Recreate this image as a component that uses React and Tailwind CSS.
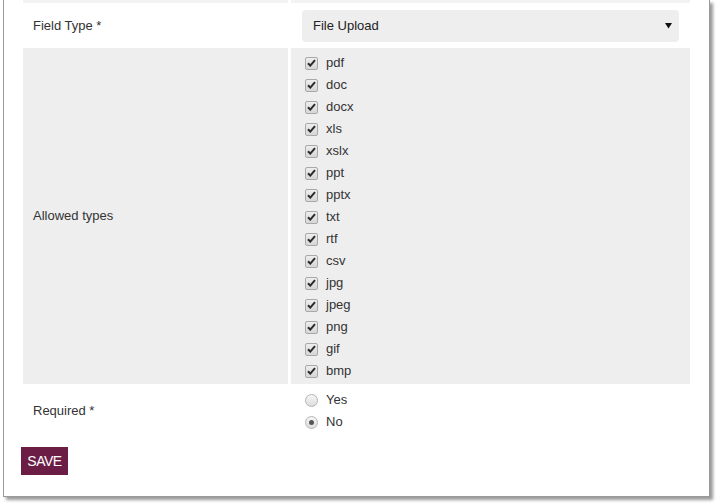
import React, { useState } from "react";

const TYPES = ["pdf", "doc", "docx", "xls", "xslx", "ppt", "pptx", "txt", "rtf", "csv", "jpg", "jpeg", "png", "gif", "bmp"];

const CheckBox = ({ checked }) => (
  <span className="w-[13px] h-[13px] rounded-[2px] border border-[#a9a9a9] bg-gradient-to-b from-[#eeeeee] to-[#d6d6d6] flex items-center justify-center shrink-0">
    {checked && (
      <svg width="9" height="8" viewBox="0 0 9 8">
        <path d="M1 4.2 L3.3 6.6 L8 1.2" stroke="#2a2a2a" strokeWidth="2" fill="none" />
      </svg>
    )}
  </span>
);

const Radio = ({ checked }) => (
  <span className="w-[13px] h-[13px] rounded-full border border-[#b5b5b5] bg-gradient-to-b from-[#f6f6f6] to-[#dddddd] flex items-center justify-center shrink-0">
    {checked && <span className="w-[5px] h-[5px] rounded-full bg-[#555]" />}
  </span>
);

const App = () => {
  const [checked] = useState(TYPES.map(() => true));
  const [required] = useState("no");

  return (
    <div className="w-[718px] h-[504px] bg-white text-[13px] text-[#333] font-['Liberation_Sans',Arial,sans-serif]">
      <div className="ml-[3px] w-[707px] h-[497px] bg-white border-l border-r border-b border-[#9a9a9a] shadow-[3px_3px_3px_rgba(0,0,0,0.4)] pl-[19px] pr-[19px]">
        {/* end of previous row */}
        <div className="flex gap-[3px] h-[3px]">
          <div className="w-[265px] bg-[#f3f3f3]" />
          <div className="flex-1 bg-[#f3f3f3]" />
        </div>

        {/* Field type */}
        <div className="flex gap-[3px] h-[45px]">
          <div className="w-[265px] flex items-center pl-[10px]">Field Type *</div>
          <div className="flex-1 flex items-center pl-[11px] pr-[11px]">
            <div className="w-full h-[32px] bg-[#eeeeee] rounded-[4px] flex items-center justify-between pl-[11px] pr-[7px] text-[#222]">
              <span>File Upload</span>
              <svg width="7" height="7" viewBox="0 0 7 7">
                <path d="M0 1 L7 1 L3.5 6.5 Z" fill="#111" />
              </svg>
            </div>
          </div>
        </div>

        {/* Allowed types */}
        <div className="flex gap-[3px] h-[336px]">
          <div className="w-[265px] bg-[#eeeeee] flex items-center pl-[10px]">Allowed types</div>
          <div className="flex-1 bg-[#eeeeee] pt-[4px] pl-[14px]">
            {TYPES.map((t, i) => (
              <label key={t} className="h-[22px] flex items-center gap-[8px]">
                <CheckBox checked={checked[i]} />
                <span>{t}</span>
              </label>
            ))}
          </div>
        </div>

        {/* Required */}
        <div className="flex gap-[3px] h-[51px]">
          <div className="w-[265px] flex items-center pl-[10px] pt-[2px]">Required *</div>
          <div className="flex-1 pt-[5px] pl-[14px]">
            <label className="h-[22px] flex items-center gap-[8px]">
              <Radio checked={required === "yes"} />
              <span>Yes</span>
            </label>
            <label className="h-[22px] flex items-center gap-[8px]">
              <Radio checked={required === "no"} />
              <span>No</span>
            </label>
          </div>
        </div>

        <button className="mt-[12px] -ml-[2px] w-[47px] h-[28px] bg-[#6b1d45] text-white text-[14px] tracking-[-0.5px] flex items-center justify-center">
          SAVE
        </button>
      </div>
    </div>
  );
};

export default App;
